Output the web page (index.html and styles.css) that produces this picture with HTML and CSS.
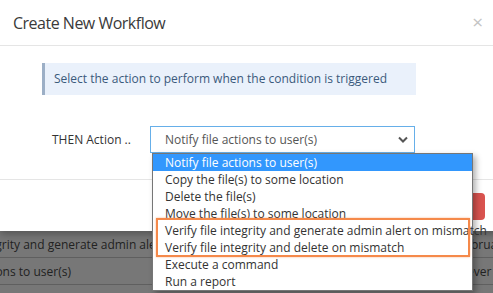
FILE: index.html
```html
<!DOCTYPE html>
<html lang="en">
<head>
  <meta charset="UTF-8" />
  <title>Create New Workflow</title>
  <link rel="stylesheet" href="styles.css">
</head>
<body>

<div class="page">
  <div class="row">
    <span class="col-action">Verify file integrity and generate admin alert on mismatch</span>
    <span class="col-when">February</span>
  </div>
  <div class="row">
    <span class="col-action">Notify file actions to user(s)</span>
    <span class="col-when">Never</span>
  </div>
</div>

<div class="modal">
  <div class="modal-header">
    <h4>Create New Workflow</h4>
    <span class="close">&times;</span>
  </div>
  <div class="modal-body">
    <div class="callout">Select the action to perform when the condition is triggered</div>
    <div class="form-row">
      <label>THEN Action ..</label>
      <div class="select">
        <span>Notify file actions to user(s)</span>
        <svg class="chevron" width="10" height="7" viewBox="0 0 10 7">
          <polyline points="1,1.5 5,5.5 9,1.5" fill="none" stroke="#555" stroke-width="2"/>
        </svg>
        <ul class="options">
          <li class="selected">Notify file actions to user(s)</li>
          <li>Copy the file(s) to some location</li>
          <li>Delete the file(s)</li>
          <li>Move the file(s) to some location</li>
          <li>Verify file integrity and generate admin alert on mismatch</li>
          <li>Verify file integrity and delete on mismatch</li>
          <li>Execute a command</li>
          <li>Run a report</li>
        </ul>
        <div class="highlight"></div>
      </div>
    </div>
  </div>
  <div class="modal-footer">
    <button class="btn-save">Save</button>
  </div>
</div>

</body>
</html>
```

FILE: styles.css
```css
body {
  font-family: 'Open Sans', sans-serif;
  font-size: 12px;
  background-color: #777;
  margin: 0;
  padding: 0;
  height: 293px;
  overflow: hidden;
  position: relative;
}
.page {
  padding-top: 231px;
  margin-left: -81px;
}
.row {
  display: flex;
  height: 26px;
  align-items: center;
  border-bottom: 1px solid #5f5f5f;
  color: #222;
}
.col-action {
  width: 539px;
  flex-shrink: 0;
  white-space: nowrap;
}
.col-when {
  white-space: nowrap;
}
.modal {
  position: absolute;
  top: 0;
  left: 0;
  width: 500px;
  background-color: white;
  box-shadow: 0 3px 8px rgba(0,0,0,0.3);
}
.modal-header {
  height: 45px;
  border-bottom: 1px solid #e5e5e5;
  display: flex;
  justify-content: space-between;
  align-items: center;
  padding: 0 17px 0 13px;
}
.modal-header h4 {
  margin: 0;
  font-size: 16px;
  font-weight: normal;
  letter-spacing: -0.5px;
  color: #3a3a3a;
}
.close {
  font-size: 19px;
  color: #c4c4c4;
  line-height: 1;
}
.modal-body {
  padding: 17px 0 26px 42px;
}
.callout {
  width: 362px;
  height: 32px;
  line-height: 32px;
  padding-left: 9px;
  background-color: #eaf1fb;
  border-left: 3px solid #9cafc6;
  color: #3b5a7c;
  white-space: nowrap;
}
.form-row {
  display: flex;
  align-items: center;
  margin-top: 31px;
}
.form-row label {
  width: 98px;
  padding-left: 10px;
  color: #333;
}
.select {
  position: relative;
  width: 243px;
  height: 25px;
  border: 1px solid #66afe9;
  display: flex;
  align-items: center;
  justify-content: space-between;
  padding: 0 6px 0 14px;
  color: #555;
}
.options {
  position: absolute;
  top: 26px;
  left: 1px;
  width: 319px;
  margin: 0;
  padding: 0;
  list-style: none;
  background-color: white;
  border: 1px solid #767676;
  box-shadow: 3px 3px 6px rgba(0,0,0,0.3);
  z-index: 2;
}
.options li {
  height: 17px;
  line-height: 17px;
  padding-left: 12px;
  color: #333;
  white-space: nowrap;
}
.options li.selected {
  background-color: #3297fd;
  color: white;
}
.highlight {
  position: absolute;
  top: 91px;
  left: 5px;
  width: 310px;
  height: 35px;
  border: 2px solid #f5894a;
  box-shadow: 0 0 2px rgba(245,137,74,0.6);
  z-index: 3;
}
.modal-footer {
  border-top: 1px solid #e5e5e5;
  padding: 13px 15px 11px 0;
  display: flex;
  justify-content: flex-end;
}
.btn-save {
  height: 27px;
  padding: 0 12px;
  border: none;
  border-radius: 4px;
  background-color: #d9534f;
  color: white;
  font-family: 'Open Sans', sans-serif;
  font-size: 12px;
}
```
